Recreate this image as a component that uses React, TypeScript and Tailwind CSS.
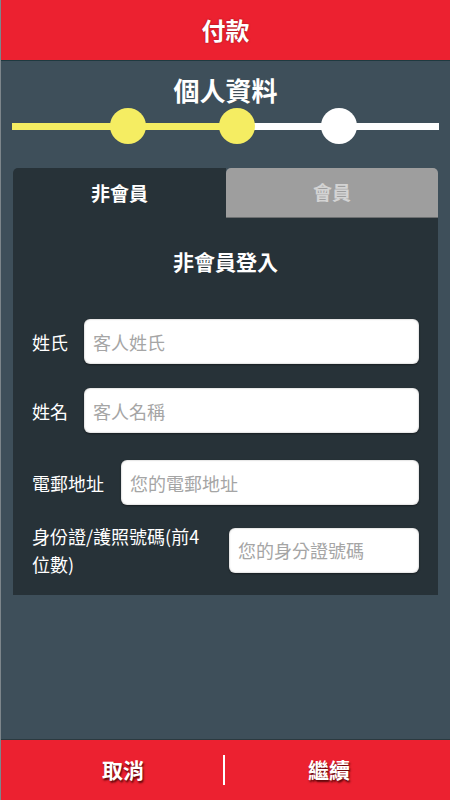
import React from "react";

const font = { fontFamily: '"Noto Sans CJK TC", "Noto Sans", sans-serif' };

function Field({
  label,
  placeholder,
  labelW,
  mt,
  twoLine,
}: {
  label: string;
  placeholder: string;
  labelW: string;
  mt: string;
  twoLine?: boolean;
}) {
  return (
    <div className={`flex items-center ${mt}`}>
      <div
        className={`${labelW} shrink-0 text-[18px] ${twoLine ? "leading-[28px] pr-3" : "leading-[26px]"} text-white`}
      >
        {label}
      </div>
      <input
        className="h-[45px] min-w-0 flex-1 rounded-[6px] bg-white px-[9px] text-[18px] text-gray-800 placeholder-[#a5a5a5] shadow-[inset_0_0_2px_rgba(0,0,0,0.35),0_1px_2px_rgba(0,0,0,0.4)] outline-none"
        placeholder={placeholder}
        style={font}
      />
    </div>
  );
}

export default function App() {
  return (
    <div
      className="flex h-[800px] w-[450px] flex-col border-l border-[#7d868b] bg-[#3e4f5a]"
      style={font}
    >
      <div className="flex h-[61px] shrink-0 items-center justify-center border-b border-[#1f3a40] bg-[#ec2130]">
        <span className="text-[24px] font-bold text-white [text-shadow:0_0_2px_rgba(80,0,0,0.6)]">
          付款
        </span>
      </div>

      <div className="flex flex-1 flex-col">
        <div className="mt-[11px] text-center text-[26px] leading-[36px] font-bold text-white">
          個人資料
        </div>

        <div className="relative mx-[11px] h-[36px]">
          <div className="absolute left-0 right-0 top-[15px] flex h-[7px]">
            <div className="h-full w-[239px] bg-[#f5ed62]" />
            <div className="h-full flex-1 bg-white" />
          </div>
          <div className="absolute left-[98px] top-0 h-[36px] w-[36px] rounded-full bg-[#f5ed62]" />
          <div className="absolute left-[207px] top-0 h-[36px] w-[36px] rounded-full bg-[#f5ed62]" />
          <div className="absolute left-[309px] top-0 h-[36px] w-[36px] rounded-full bg-white" />
        </div>

        <div className="mx-[12px] mt-[24px] flex flex-col">
          <div className="flex h-[50px]">
            <div className="flex w-[213px] items-center justify-center rounded-tl-[5px] bg-[#273238] text-[19px] font-bold text-white">
              非會員
            </div>
            <div className="flex flex-1 items-center justify-center rounded-t-[5px] border-b border-[#6c6f70] bg-[#9e9e9e] text-[19px] font-bold text-[#d3d3d3]">
              會員
            </div>
          </div>
          <div className="bg-[#273238] px-[19px] pt-[28px] pb-[17px]">
            <div className="text-center text-[21px] leading-[30px] font-bold text-white">
              非會員登入
            </div>
            <div className="mt-[43px]">
              <Field label="姓氏" placeholder="客人姓氏" labelW="w-[52px]" mt="" />
              <Field label="姓名" placeholder="客人名稱" labelW="w-[52px]" mt="mt-[24px]" />
              <Field label="電郵地址" placeholder="您的電郵地址" labelW="w-[89px]" mt="mt-[27px]" />
              <Field
                label="身份證/護照號碼(前4位數)"
                placeholder="您的身分證號碼"
                labelW="w-[197px]"
                mt="mt-[17px]"
                twoLine
              />
            </div>
          </div>
        </div>
      </div>

      <div className="flex h-[61px] shrink-0 items-center border-t border-[#2b3a40] bg-[#ec2130]">
        <div className="flex w-[222px] items-center justify-center pl-[22px] text-[21px] font-bold text-white [text-shadow:1px_2px_2px_rgba(60,0,0,0.85)]">
          取消
        </div>
        <div className="h-[30px] w-[2px] bg-white" />
        <div className="flex flex-1 items-center justify-center pr-[17px] text-[21px] font-bold text-white [text-shadow:1px_2px_2px_rgba(60,0,0,0.85)]">
          繼續
        </div>
      </div>
    </div>
  );
}
